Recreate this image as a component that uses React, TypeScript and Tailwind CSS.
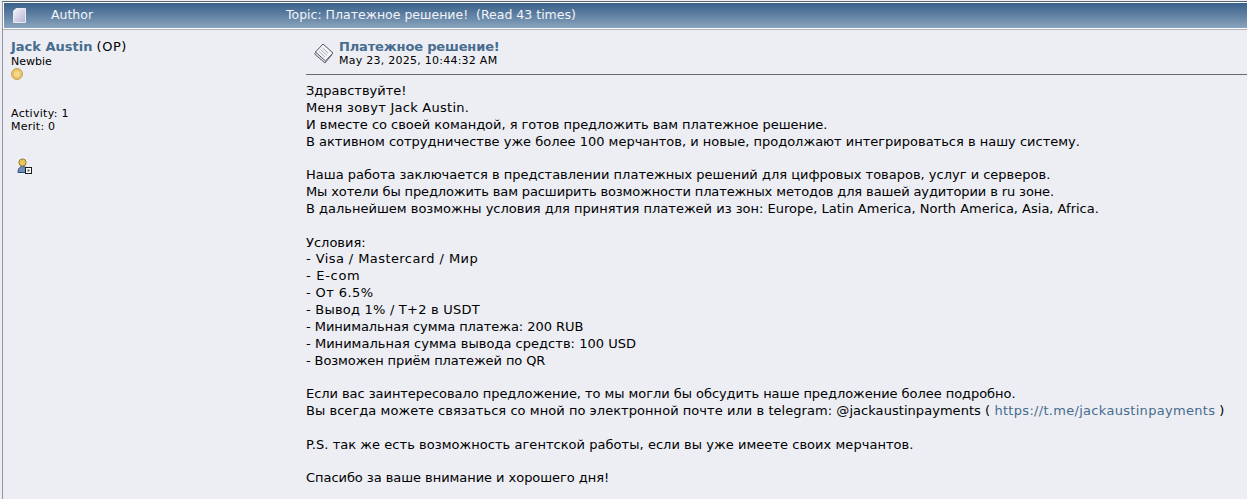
const font = "font-['DejaVu_Sans',Verdana,sans-serif]"

function PageIcon() {
  return (
    <svg width="13" height="15" viewBox="0 0 13 15" className="block">
      <defs>
        <linearGradient id="page" x1="0" y1="0" x2="1" y2="1">
          <stop offset="0" stopColor="#f6f6fb" />
          <stop offset="1" stopColor="#b5b0d4" />
        </linearGradient>
      </defs>
      <path d="M3 .5h9.5v14H.5V3z" fill="url(#page)" stroke="#e8eaf2" />
    </svg>
  )
}

function TopicIcon() {
  return (
    <svg width="21" height="21" viewBox="0 0 21 21" className="block">
      <path d="M9 3 18.5 12 12 20 1.5 11z" fill="#dfe1e8" stroke="#5a606a" />
      <path d="M10 1 20 10l-7.5 8L2.5 9z" fill="#f4f5f9" stroke="#4f5660" />
      <path d="M7.5 6.5 14 12.5M6 8.5l6 5.5M9.5 5l5.5 5" fill="none" stroke="#a4a9b3" />
    </svg>
  )
}

function CoinIcon() {
  return (
    <div className="flex h-3 w-3 items-center justify-center rounded-full border border-[#c9a75a] bg-[#e8c266]">
      <div className="h-[6px] w-[6px] rounded-full bg-[#f5d98a]" />
    </div>
  )
}

function ProfileIcon() {
  return (
    <svg width="15" height="16" viewBox="0 0 15 16" className="block">
      <path d="M1 14.5c0-3.5 1.5-6 4.5-6s4.5 1.5 4.5 3v3z" fill="#6f8fbd" stroke="#2f4a78" />
      <circle cx="5.5" cy="4.5" r="3.6" fill="#ecc455" stroke="#8f7c36" />
      <rect x="8.5" y="9.5" width="6" height="6" fill="#fff" stroke="#1c1c1c" />
      <rect x="10.5" y="11.5" width="2" height="2" fill="#555" />
    </svg>
  )
}

type Line = { text: string; className?: string }

const group1: Line[] = [
  { text: 'Здравствуйте!' },
  { text: 'Меня зовут Jack Austin.', className: 'tracking-[0.26px]' },
  { text: 'И вместе со своей командой, я готов предложить вам платежное решение.', className: 'tracking-[-0.03px]' },
  { text: 'В активном сотрудничестве уже более 100 мерчантов, и новые, продолжают интегрироваться в нашу систему.' },
]

const group2: Line[] = [
  { text: 'Наша работа заключается в представлении платежных решений для цифровых товаров, услуг и серверов.' },
  {
    text: 'Мы хотели бы предложить вам расширить возможности платежных методов для вашей аудитории в ru зоне.',
    className: 'tracking-[-0.12px]',
  },
  { text: 'В дальнейшем возможны условия для принятия платежей из зон: Europe, Latin America, North America, Asia, Africa.' },
]

const terms: Line[] = [
  { text: 'Условия:' },
  { text: '- Visa / Mastercard / Мир', className: 'tracking-[0.42px]' },
  { text: '- E-com', className: 'tracking-[0.7px]' },
  { text: '- От 6.5%', className: 'tracking-[0.4px]' },
  { text: '- Вывод 1% / T+2 в USDT', className: 'tracking-[0.22px]' },
  { text: '- Минимальная сумма платежа: 200 RUB', className: 'tracking-[-0.05px]' },
  { text: '- Минимальная сумма вывода средств: 100 USD', className: 'tracking-[0.03px]' },
  { text: '- Возможен приём платежей по QR', className: 'tracking-[-0.1px]' },
]

function Lines({ items }: { items: Line[] }) {
  return (
    <div className="mb-[16.85px]">
      {items.map((line) => (
        <div key={line.text} className={line.className}>
          {line.text}
        </div>
      ))}
    </div>
  )
}

export default function App() {
  return (
    <div className={`${font} h-[499px] w-[1247px] overflow-hidden bg-[#eceef4] pl-[2px] pt-[1px] text-black`}>
      <div className="h-full border-l border-t border-[#8f979c] border-t-[#56666e]">
        {/* Table header */}
        <div className="border-b border-[#aeb3b8]">
          <div className="flex h-[27px] items-center border-y border-l border-white bg-gradient-to-b from-[#38608a] to-[#8aa4bd] text-[12.5px] text-[#f2f4f8]">
            <div className="flex w-[282px] shrink-0 items-center">
              <div className="ml-[9px] w-[38px]">
                <PageIcon />
              </div>
              <span>Author</span>
            </div>
            <span className="whitespace-pre">Topic: Платежное решение!  (Read 43 times)</span>
          </div>
        </div>

        <div className="flex">
          {/* Poster info */}
          <div className="w-[303px] shrink-0 pl-[8px] pt-[9px] text-[11px] leading-[13px]">
            <div className="text-[13px] leading-[16px]">
              <a className="font-bold text-[#476c8e]">Jack Austin</a> <span className="tracking-[0.5px]">(OP)</span>
            </div>
            <div>Newbie</div>
            <div>
              <CoinIcon />
            </div>
            <div className="mt-[27px] tracking-[0.3px]">Activity: 1</div>
            <div className="tracking-[0.25px]">Merit: 0</div>
            <div className="ml-[6px] mt-[25px]">
              <ProfileIcon />
            </div>
          </div>

          {/* Post */}
          <div className="min-w-0 flex-1">
            <div className="flex h-[45px] items-center border-b border-[#6b6b6b] pl-[7px] pt-[3px]">
              <div className="mr-[5px]">
                <TopicIcon />
              </div>
              <div>
                <div className="text-[13px] font-bold leading-[15px] tracking-[-0.15px] text-[#476c8e]">
                  Платежное решение!
                </div>
                <div className="text-[11px] leading-[14px] tracking-[0.25px]">May 23, 2025, 10:44:32 AM</div>
              </div>
            </div>
            <div className="whitespace-nowrap pt-[8px] text-[13px] leading-[16.85px]">
              <Lines items={group1} />
              <Lines items={group2} />
              <Lines items={terms} />
              <div className="mb-[16.85px]">
                <div className="tracking-[-0.05px]">
                  Если вас заинтересовало предложение, то мы могли бы обсудить наше предложение более подробно.
                </div>
                <div>
                  <span className="tracking-[0.05px]">
                    Вы всегда можете связаться со мной по электронной почте или в telegram: @jackaustinpayments ({' '}
                  </span>
                  <a className="tracking-[0.3px] text-[#476c8e]">https://t.me/jackaustinpayments</a> )
                </div>
              </div>
              <Lines
                items={[
                  {
                    text: 'P.S. так же есть возможность агентской работы, если вы уже имеете своих мерчантов.',
                    className: 'tracking-[0.04px]',
                  },
                ]}
              />
              <div className="tracking-[-0.05px]">Спасибо за ваше внимание и хорошего дня!</div>
            </div>
          </div>
        </div>
      </div>
    </div>
  )
}
